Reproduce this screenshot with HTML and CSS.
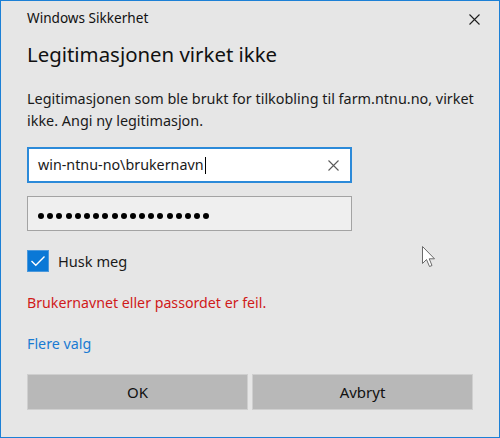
FILE: index.html
```html
<!DOCTYPE html>
<html lang="no">
<head>
<meta charset="utf-8">
<title>Windows Sikkerhet</title>
<link rel="stylesheet" href="styles.css">
</head>
<body>
<div class="dialog">
  <div class="titlebar">
    <span class="apptitle">Windows Sikkerhet</span>
    <svg class="close" width="11" height="11" viewBox="0 0 11 11"><path d="M0.5 0.5 L10.5 10.5 M10.5 0.5 L0.5 10.5" stroke="#1e1e1e" stroke-width="1.1" fill="none"/></svg>
  </div>
  <h1 class="heading">Legitimasjonen virket ikke</h1>
  <p class="message">Legitimasjonen som ble brukt for tilkobling til farm.ntnu.no, virket<br>ikke. Angi ny legitimasjon.</p>
  <div class="field field-active">
    <span class="value">win-ntnu-no\brukernavn</span><span class="caret"></span>
    <svg class="clear" width="11" height="11" viewBox="0 0 11 11"><path d="M0.5 0.5 L10.5 10.5 M10.5 0.5 L0.5 10.5" stroke="#5a5a5a" stroke-width="1.1" fill="none"/></svg>
  </div>
  <div class="field field-password">
    <span class="dots">
      <i></i><i></i><i></i><i></i><i></i><i></i><i></i><i></i><i></i><i></i><i></i><i></i><i></i><i></i><i></i><i></i><i></i><i></i><i></i>
    </span>
  </div>
  <label class="remember">
    <span class="checkbox"><svg width="22" height="22" viewBox="0 0 22 22"><path d="M4.5 11 L8.8 15.3 L17.5 6.6" stroke="#fff" stroke-width="1.4" fill="none"/></svg></span>
    <span>Husk meg</span>
  </label>
  <p class="error">Brukernavnet eller passordet er feil.</p>
  <a class="more">Flere valg</a>
  <div class="buttons">
    <button class="btn">OK</button>
    <button class="btn">Avbryt</button>
  </div>
  <svg class="pointer" width="14" height="22" viewBox="0 0 14 22"><path d="M0.5 0.5 V17.5 L4.5 13.5 L7.5 20.5 L10 19.5 L7.2 12.8 H12.5 Z" fill="#fff" stroke="#6a6a6a" stroke-width="1" stroke-linejoin="miter"/></svg>
</div>
</body>
</html>
```
FILE: styles.css
```css
html, body {
  margin: 0;
  padding: 0;
}
body {
  width: 500px;
  height: 438px;
  overflow: hidden;
  font-family: "Noto Sans", "Open Sans", sans-serif;
  color: #1a1a1a;
}
.dialog {
  position: relative;
  box-sizing: border-box;
  width: 500px;
  height: 438px;
  border: 1px solid #1c80d6;
  background: #e6e6e6;
  padding: 7px 26px 0 26px;
  display: flex;
  flex-direction: column;
}
.titlebar {
  display: flex;
  justify-content: space-between;
  align-items: center;
  height: 20px;
  margin-right: -7px;
}
.apptitle {
  font-size: 13.6px;
  line-height: 20px;
  color: #111;
}
.close {
  display: block;
  margin-top: 2px;
}
.heading {
  margin: 12px 0 0 0;
  font-weight: normal;
  font-size: 20.4px;
  line-height: 28px;
  color: #111;
}
.message {
  margin: 20px -20px 0 0;
  font-size: 14.4px;
  line-height: 22px;
  white-space: nowrap;
  color: #1a1a1a;
}
.field {
  box-sizing: border-box;
  width: 325px;
  display: flex;
  align-items: center;
}
.field-active {
  margin-top: 15px;
  height: 36px;
  border: 2px solid #2c8ad9;
  background: #fff;
  padding: 0 10px 0 9px;
  line-height: 32px;
  font-size: 14.3px;
}
.caret {
  width: 1px;
  height: 17px;
  background: #000;
  margin-left: 1px;
}
.clear {
  margin-left: auto;
  margin-right: 1px;
}
.field-password {
  margin-top: 13px;
  height: 35px;
  border: 1px solid #a3a3a3;
  background: #efefef;
  padding: 0 0 0 10px;
}
.dots {
  display: flex;
  gap: 3.2px;
  margin-top: 5px;
}
.dots i {
  display: block;
  width: 6px;
  height: 6px;
  border-radius: 50%;
  background: #000;
}
.remember {
  margin-top: 19px;
  display: flex;
  align-items: center;
  gap: 9px;
  font-size: 14.6px;
  line-height: 22px;
}
.checkbox {
  box-sizing: border-box;
  width: 22px;
  height: 22px;
  background: #0a78d6;
  border: 1px solid #4a98dc;
  display: flex;
  align-items: center;
  justify-content: center;
}
.checkbox svg {
  display: block;
  margin: -1px;
}
.error {
  margin: 20px 0 0 0;
  font-size: 14.2px;
  line-height: 22px;
  color: #d01a1a;
}
.more {
  margin-top: 19px;
  font-size: 14.3px;
  line-height: 22px;
  color: #1a7bd2;
  align-self: flex-start;
}
.buttons {
  margin-top: 19px;
  display: grid;
  grid-template-columns: 1fr 1fr;
  gap: 4px;
}
.btn {
  box-sizing: border-box;
  height: 36px;
  border: 1px solid #cfcfcf;
  background: #b8b8b8;
  font-family: "Noto Sans", "Open Sans", sans-serif;
  font-size: 15px;
  color: #111;
  padding: 0;
}
.pointer {
  position: absolute;
  left: 421px;
  top: 245px;
}
```
